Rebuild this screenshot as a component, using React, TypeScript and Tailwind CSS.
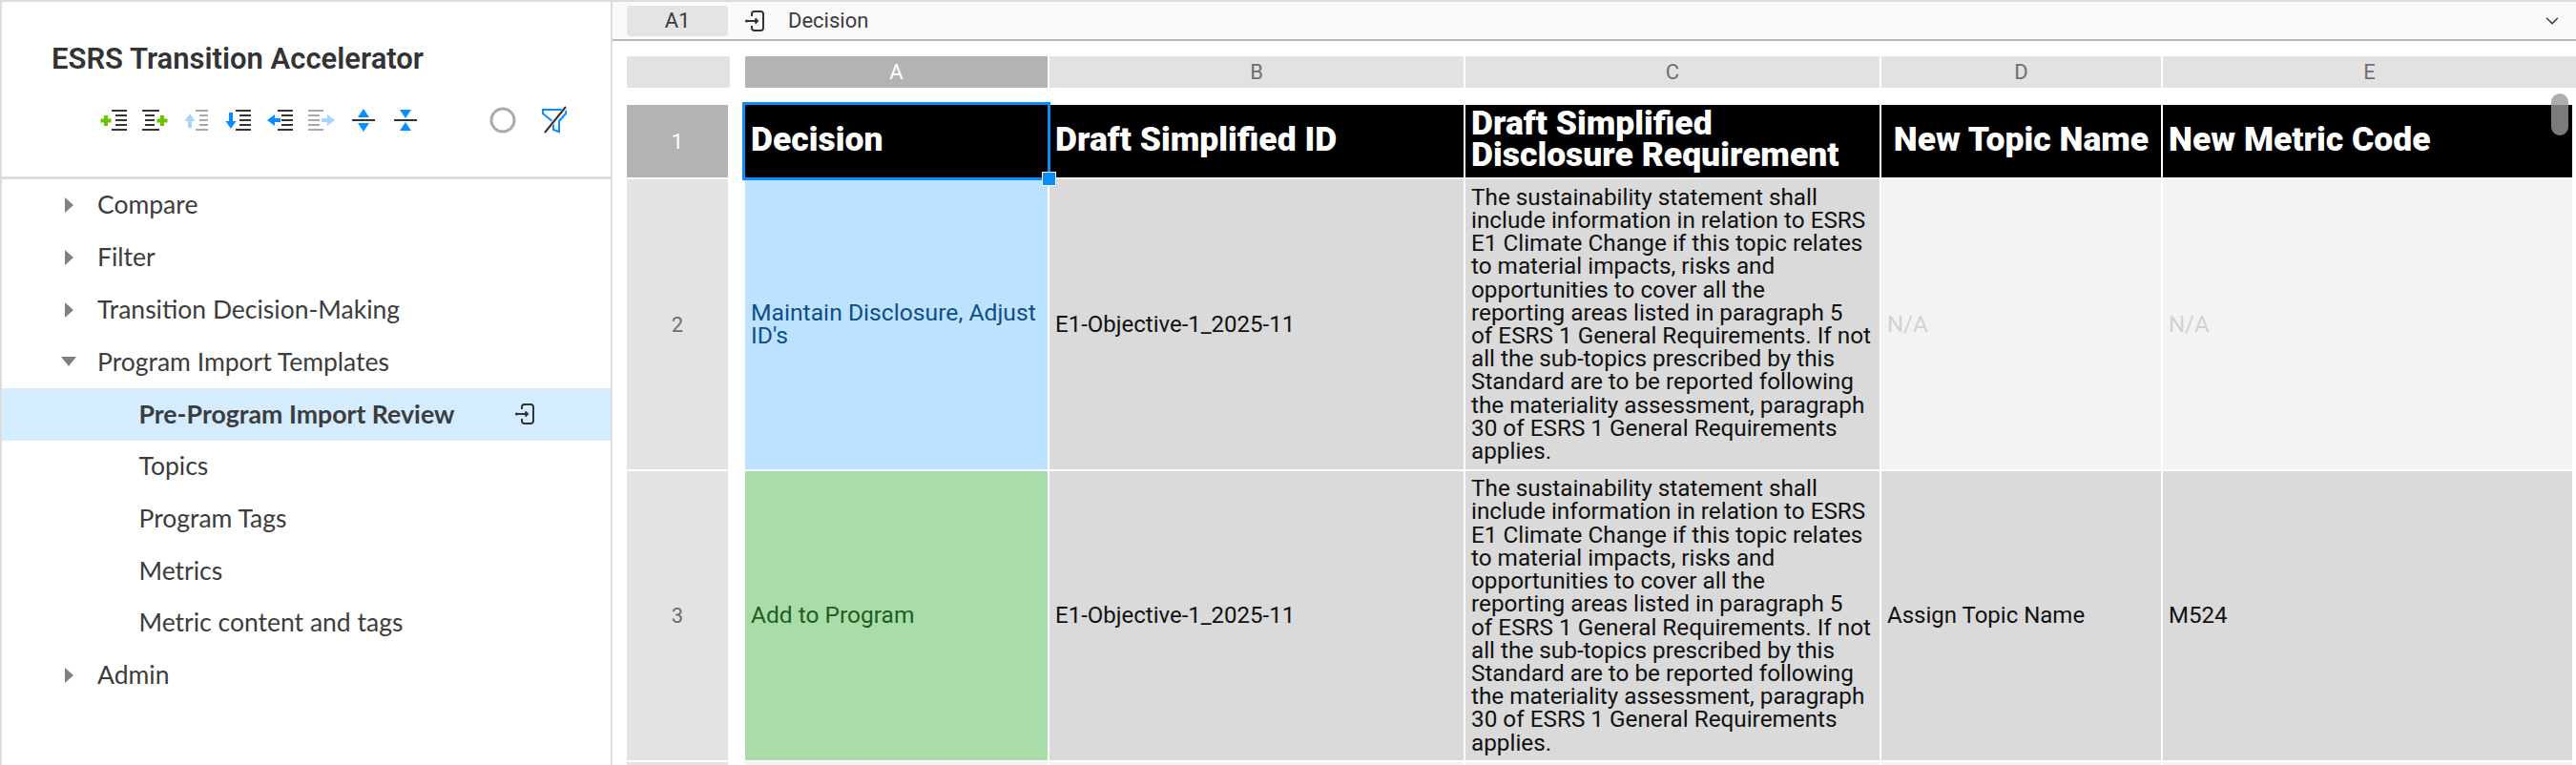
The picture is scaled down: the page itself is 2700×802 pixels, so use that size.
import { ChevronDown } from "lucide-react";

const DARK = "#333333";
const BLUE = "#0a8dff";
const PALE = "#a8d4ff";
const GREEN = "#6cc400";
const GREY = "#a9a9a9";

const statement = [
  "The sustainability statement shall",
  "include information in relation to ESRS",
  "E1 Climate Change if this topic relates",
  "to material impacts, risks and",
  "opportunities to cover all the",
  "reporting areas listed in paragraph 5",
  "of ESRS 1 General Requirements. If not",
  "all the sub-topics prescribed by this",
  "Standard are to be reported following",
  "the materiality assessment, paragraph",
  "30 of ESRS 1 General Requirements",
  "applies.",
];

const EnterIcon = ({ className }: { className: string }) => (
  <svg viewBox="0 0 22 22" fill="none" stroke="#333" strokeWidth="2" className={className}>
    <path d="M8 6V3.5A2.5 2.5 0 0 1 10.5 1h7A2.5 2.5 0 0 1 20 3.5v15a2.5 2.5 0 0 1-2.5 2.5h-7A2.5 2.5 0 0 1 8 18.5V16" />
    <path d="M3 11h11M11.5 8.5 14 11l-2.5 2.5" />
    <circle cx="2.5" cy="11" r="1.6" fill="#333" stroke="none" />
  </svg>
);

// indent toolbar icons: five rows of lines plus a coloured sign next to them
const Rows = ({ x1, x2, inset, color }: { x1: number; x2: number; inset: "left" | "right" | "both"; color: string }) => {
  const a = inset === "right" ? x1 : inset === "both" ? x1 + 3 : x1 + 4;
  const b = inset === "right" ? x2 - 4 : inset === "both" ? x2 - 5 : x2;
  return (
    <g stroke={color} strokeWidth="2">
      <path d={`M${x1} 2H${x2}M${x1} 22H${x2}`} />
      <path d={`M${a} 7H${b}M${a} 12H${b}M${a} 17H${b}`} />
    </g>
  );
};

const Sign = ({ d, color }: { d: string; color: string }) => <path d={d} fill={color} />;

const ToolIcon = ({ children }: { children: React.ReactNode }) => (
  <svg viewBox="0 0 30 24" className="h-[24px] w-[30px] shrink-0">
    {children}
  </svg>
);

const Toolbar = () => (
  <div className="mt-[32px] flex items-center gap-[13.7px] pl-[102px]">
    <ToolIcon>
      <Rows x1={13} x2={29} inset="left" color={DARK} />
      <Sign d="M5 7h4v3.5h3.5v4H9V18H5v-3.5H1.5v-4H5z" color={GREEN} />
    </ToolIcon>
    <ToolIcon>
      <Rows x1={1} x2={19} inset="both" color={DARK} />
      <Sign d="M20 7h4v3.5h3.5v4H24V18h-4v-3.5h-3.5v-4H20z" color={GREEN} />
    </ToolIcon>
    <ToolIcon>
      <Rows x1={14} x2={27} inset="left" color={GREY} />
      <Sign d="M8 5l5.5 8H10v7H6v-7H2.5z" color={PALE} />
    </ToolIcon>
    <ToolIcon>
      <Rows x1={12} x2={28} inset="left" color={DARK} />
      <Sign d="M5 4h4v9h3.5L7 21 1.5 13H5z" color={BLUE} />
    </ToolIcon>
    <ToolIcon>
      <Rows x1={12} x2={28} inset="left" color={DARK} />
      <Sign d="M1 12l8-6v4h6v4H9v4z" color={BLUE} />
    </ToolIcon>
    <ToolIcon>
      <Rows x1={1} x2={17} inset="right" color={GREY} />
      <Sign d="M29 12l-8-6v4h-6v4h6v4z" color={PALE} />
    </ToolIcon>
    <ToolIcon>
      <path d="M3 12H27" stroke={DARK} strokeWidth="2" />
      <Sign d="M15 0l6 9H9z" color={BLUE} />
      <Sign d="M15 24l-6-9h12z" color={BLUE} />
    </ToolIcon>
    <ToolIcon>
      <path d="M3 12H27" stroke={DARK} strokeWidth="2" />
      <Sign d="M15 10L9 1h12z" color={BLUE} />
      <Sign d="M15 14l6 9H9z" color={BLUE} />
    </ToolIcon>
    <svg viewBox="0 0 28 28" className="ml-[59px] h-[28px] w-[28px] shrink-0">
      <circle cx="14" cy="14" r="12" fill="none" stroke="#ababab" strokeWidth="3" />
    </svg>
    <svg viewBox="0 0 30 30" className="ml-[12px] h-[30px] w-[30px] shrink-0">
      <path d="M3 4H27V8L20 16V27L14 25V17L3 8Z" fill="none" stroke={BLUE} strokeWidth="2" />
      <path d="M27 2 5 27" stroke="#fff" strokeWidth="4" />
      <path d="M27 1 5 28" stroke="#333" strokeWidth="2" />
    </svg>
  </div>
);

type NavItem = { label: string; arrow?: "right" | "down"; child?: boolean; active?: boolean };

const navItems: NavItem[] = [
  { label: "Compare", arrow: "right" },
  { label: "Filter", arrow: "right" },
  { label: "Transition Decision-Making", arrow: "right" },
  { label: "Program Import Templates", arrow: "down" },
  { label: "Pre-Program Import Review", child: true, active: true },
  { label: "Topics", child: true },
  { label: "Program Tags", child: true },
  { label: "Metrics", child: true },
  { label: "Metric content and tags", child: true },
  { label: "Admin", arrow: "right" },
];

const Sidebar = () => (
  <aside className="flex h-full w-[642px] shrink-0 flex-col border-x-2 border-[#dcdcdc] font-['Lato',sans-serif]">
    <div className="h-[185.6px] shrink-0 border-b-[3px] border-[#dcdcdc] pt-[43px]">
      <h1 className="pl-[52px] font-['Roboto',sans-serif] text-[31px] leading-[34px] font-semibold text-[#333]">
        ESRS Transition Accelerator
      </h1>
      <Toolbar />
    </div>
    <nav className="flex flex-col">
      {navItems.map((item) => (
        <div
          key={item.label}
          className={`flex h-[54.8px] items-center ${item.active ? "bg-[#d4ecff] text-[26.7px] font-bold" : "text-[26.5px]"}`}
        >
          <span className={`flex shrink-0 items-center ${item.child ? "w-[143.5px]" : "w-[100px]"}`}>
            {item.arrow === "right" && <span className="ml-[66px] h-0 w-0 border-y-[8.5px] border-l-[9.5px] border-y-transparent border-l-[#808080]" />}
            {item.arrow === "down" && <span className="ml-[62px] h-0 w-0 border-x-[8.5px] border-t-[10px] border-x-transparent border-t-[#808080]" />}
          </span>
          <span className="text-[#3c3c3c]">{item.label}</span>
          {item.active && <EnterIcon className="ml-auto mr-[79px] h-[22px] w-[22px]" />}
        </div>
      ))}
    </nav>
  </aside>
);

const headCell = "flex items-center bg-black px-[6px] pb-[4px] font-['Roboto',sans-serif] text-[35.5px] leading-[33px] font-black text-white";
const cellBox = "flex items-center px-[6px] leading-[24.2px]";
const bodyCell = `${cellBox} text-[24px]`;
const colHead = "flex items-center justify-center bg-[#e2e2e2] text-[22px] text-[#6e6e6e]";
const rowHead = "flex items-center justify-center bg-[#e3e3e3] text-[22px] text-[#6e6e6e]";

const Statement = () => (
  <div className={`${cellBox} bg-[#dadada] text-[24.3px] text-[#111]`}>
    <div>
      {statement.map((line) => (
        <span key={line} className="block whitespace-nowrap">
          {line}
        </span>
      ))}
    </div>
  </div>
);

const Sheet = () => (
  <div className="relative flex-1 pl-[15px] pt-[16px] font-['Roboto',sans-serif]">
    <div className="mb-[18px] grid h-[33px] grid-cols-[106px_317px_434px_434px_293px_433px] gap-x-[2px]">
      <div className="mr-[-2px] rounded-[2px] bg-[#e2e2e2]" />
      <div className="ml-[16px] flex w-[317px] items-center justify-center bg-[#b3b3b3] text-[22px] text-white">A</div>
      <div className={`${colHead} ml-[16px] w-[434px]`}>B</div>
      <div className={`${colHead} ml-[16px] w-[434px]`}>C</div>
      <div className={`${colHead} ml-[16px] w-[293px]`}>D</div>
      <div className={`${colHead} ml-[16px] w-[433px]`}>E</div>
    </div>
    <div className="flex gap-x-[18px]">
      <div className="grid w-[106px] grid-rows-[76px_304px_303px_20px] gap-y-[2px]">
        <div className="flex items-center justify-center bg-[#b3b3b3] text-[22px] text-white">1</div>
        <div className={rowHead}>2</div>
        <div className={rowHead}>3</div>
        <div className={rowHead} />
      </div>
      <div className="grid grid-cols-[317px_434px_434px_293px_429px] grid-rows-[76px_304px_303px_20px] gap-[2px]">
        <div className={`${headCell} relative`}>
          Decision
          <div className="absolute -inset-[3px] border-[3px] border-[#0a8dff]" />
          <div className="absolute bottom-[-9px] right-[-9px] h-[15px] w-[15px] border border-white bg-[#0a8dff]" />
        </div>
        <div className={headCell}>Draft Simplified ID</div>
        <div className={headCell}>Draft Simplified Disclosure Requirement</div>
        <div className={`${headCell} justify-center`}>New Topic Name</div>
        <div className={headCell}>New Metric Code</div>

        <div className={`${cellBox} bg-[#bde2ff] text-[24.7px] text-[#0d4f86]`}>Maintain Disclosure, Adjust ID's</div>
        <div className={`${bodyCell} bg-[#dadada] text-[#111]`}>E1-Objective-1_2025-11</div>
        <Statement />
        <div className={`${bodyCell} bg-[#f3f3f3] text-[#d2d2d2]`}>N/A</div>
        <div className={`${bodyCell} bg-[#f3f3f3] text-[#d2d2d2]`}>N/A</div>

        <div className={`${cellBox} bg-[#aadcaa] text-[24.5px] text-[#1d5e1f]`}>Add to Program</div>
        <div className={`${bodyCell} bg-[#dadada] text-[#111]`}>E1-Objective-1_2025-11</div>
        <Statement />
        <div className={`${bodyCell} bg-[#dadada] text-[#111]`}>Assign Topic Name</div>
        <div className={`${bodyCell} bg-[#dadada] text-[#111]`}>M524</div>

        <div className="bg-[#f3f3f3]" />
        <div className="bg-[#f3f3f3]" />
        <div className="bg-[#f3f3f3]" />
        <div className="bg-[#f3f3f3]" />
        <div className="bg-[#f3f3f3]" />
      </div>
    </div>
    <div className="absolute right-[8px] top-[55px] h-[44px] w-[18px] rounded-full bg-[#9a9a9a]/80" />
  </div>
);

export default function App() {
  return (
    <div className="flex h-[802px] w-[2700px] overflow-hidden border-t-2 border-[#dcdcdc] bg-white">
      <Sidebar />
      <main className="flex min-w-0 flex-1 flex-col">
        <div className="flex h-[41px] shrink-0 items-center border-b-2 border-[#b8b8b8] bg-[#fafafa] pl-[15px] pr-[14px] font-['Roboto',sans-serif] text-[22px] text-[#3c3c3c]">
          <div className="flex h-[32px] w-[106px] items-center justify-center rounded-[4px] bg-[#e4e4e4]">A1</div>
          <EnterIcon className="ml-[17px] h-[22px] w-[22px]" />
          <span className="ml-[24px]">Decision</span>
          <ChevronDown className="ml-auto h-[22px] w-[22px] text-[#333]" strokeWidth={1.5} />
        </div>
        <Sheet />
      </main>
    </div>
  );
}
